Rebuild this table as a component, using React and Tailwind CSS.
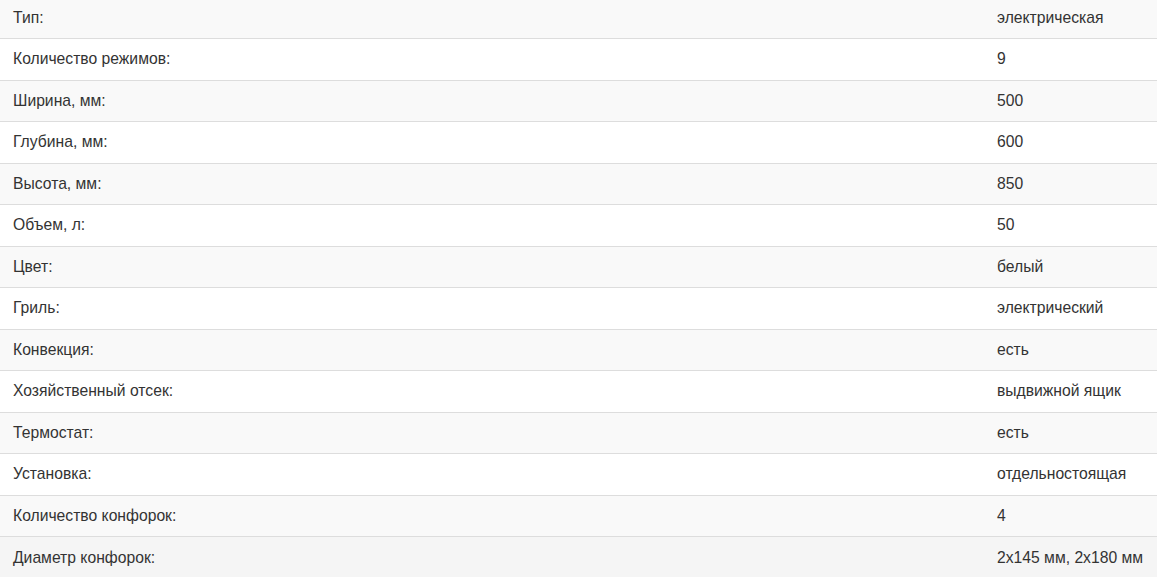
const specs = [
    ["Тип:", "электрическая"],
    ["Количество режимов:", "9"],
    ["Ширина, мм:", "500"],
    ["Глубина, мм:", "600"],
    ["Высота, мм:", "850"],
    ["Объем, л:", "50"],
    ["Цвет:", "белый"],
    ["Гриль:", "электрический"],
    ["Конвекция:", "есть"],
    ["Хозяйственный отсек:", "выдвижной ящик"],
    ["Термостат:", "есть"],
    ["Установка:", "отдельностоящая"],
    ["Количество конфорок:", "4"],
    ["Диаметр конфорок:", "2х145 мм, 2х180 мм"],
];

export default function App() {
    return (
        <div className="h-[577px] w-[1157px] overflow-hidden bg-white font-['Liberation_Sans',Arial,sans-serif] text-[15.7px] text-[#333]">
            <table className="-mt-[3.5px] w-full border-collapse">
                <tbody>
                    {specs.map(([label, value], i) => {
                        const last = i === specs.length - 1;
                        const rowBg = last ? "bg-[#f5f5f5]" : i % 2 === 0 ? "bg-[#f9f9f9]" : "bg-white";
                        return (
                            <tr key={label} className={rowBg}>
                                <td className="h-[41.5px] w-[984px] border-t border-[#ddd] px-[13px] align-middle leading-[20px]">
                                    {label}
                                </td>
                                <td className="h-[41.5px] border-t border-[#ddd] pl-[13px] pr-2 align-middle leading-[20px]">
                                    {value}
                                </td>
                            </tr>
                        );
                    })}
                </tbody>
            </table>
        </div>
    );
}
